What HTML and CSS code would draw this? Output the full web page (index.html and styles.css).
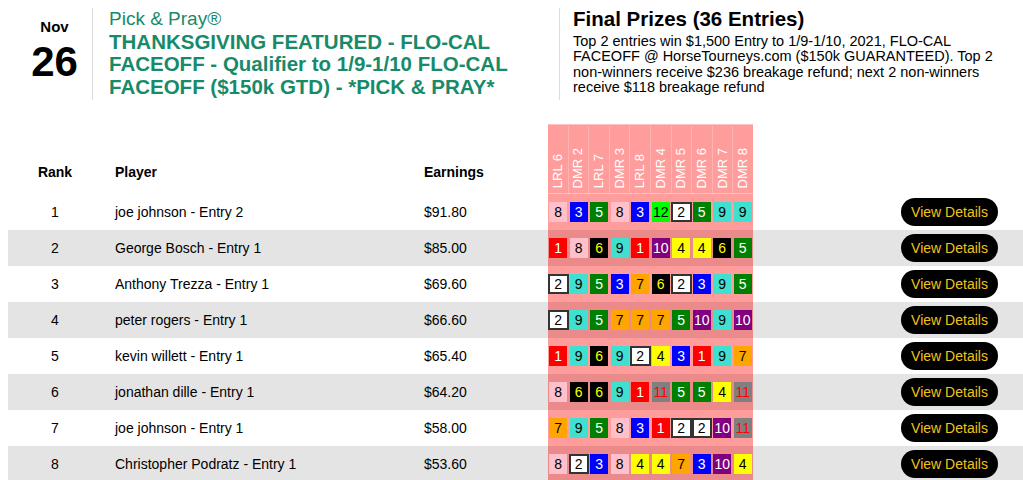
FILE: index.html
```html
<!DOCTYPE html>
<html lang="en">
<head>
<meta charset="utf-8">
<title>Pick &amp; Pray Leaderboard</title>
<link rel="stylesheet" href="styles.css">
</head>
<body>
<div class="top">
  <div class="date">
    <div class="mon">Nov</div>
    <div class="day">26</div>
  </div>
  <div class="title">
    <div class="brand">Pick &amp; Pray®</div>
    <div class="name">THANKSGIVING FEATURED - FLO-CAL FACEOFF - Qualifier to 1/9-1/10 FLO-CAL FACEOFF ($150k GTD) - *PICK &amp; PRAY*</div>
  </div>
  <div class="prizes">
    <div class="prize-head">Final Prizes (36 Entries)</div>
    <div class="prize-text">Top 2 entries win $1,500 Entry to 1/9-1/10, 2021, FLO-CAL FACEOFF @ HorseTourneys.com ($150k GUARANTEED). Top 2 non-winners receive $236 breakage refund; next 2 non-winners receive $118 breakage refund</div>
  </div>
</div>

<table class="board">
  <thead>
    <tr>
      <th class="c-rank">Rank</th>
      <th class="c-player">Player</th>
      <th class="c-earn">Earnings</th>
      <th class="c-picks">
        <div class="races">
          <span class="race"><span>LRL 6</span></span>
          <span class="race"><span>DMR 2</span></span>
          <span class="race"><span>LRL 7</span></span>
          <span class="race"><span>DMR 3</span></span>
          <span class="race"><span>LRL 8</span></span>
          <span class="race"><span>DMR 4</span></span>
          <span class="race"><span>DMR 5</span></span>
          <span class="race"><span>DMR 6</span></span>
          <span class="race"><span>DMR 7</span></span>
          <span class="race"><span>DMR 8</span></span>
        </div>
      </th>
      <th class="c-act"></th>
    </tr>
  </thead>
  <tbody>
    <tr>
      <td class="c-rank">1</td><td class="c-player">joe johnson - Entry 2</td><td class="c-earn">$91.80</td>
      <td class="c-picks"><div class="picks"><span class="p p8">8</span><span class="p p3">3</span><span class="p p5">5</span><span class="p p8">8</span><span class="p p3">3</span><span class="p p12">12</span><span class="p p2">2</span><span class="p p5">5</span><span class="p p9">9</span><span class="p p9">9</span></div></td>
      <td class="c-act"><a class="btn" href="#">View Details</a></td>
    </tr>
    <tr class="alt">
      <td class="c-rank">2</td><td class="c-player">George Bosch - Entry 1</td><td class="c-earn">$85.00</td>
      <td class="c-picks"><div class="picks"><span class="p p1">1</span><span class="p p8">8</span><span class="p p6">6</span><span class="p p9">9</span><span class="p p1">1</span><span class="p p10">10</span><span class="p p4">4</span><span class="p p4">4</span><span class="p p6">6</span><span class="p p5">5</span></div></td>
      <td class="c-act"><a class="btn" href="#">View Details</a></td>
    </tr>
    <tr>
      <td class="c-rank">3</td><td class="c-player">Anthony Trezza - Entry 1</td><td class="c-earn">$69.60</td>
      <td class="c-picks"><div class="picks"><span class="p p2">2</span><span class="p p9">9</span><span class="p p5">5</span><span class="p p3">3</span><span class="p p7">7</span><span class="p p6">6</span><span class="p p2">2</span><span class="p p3">3</span><span class="p p9">9</span><span class="p p5">5</span></div></td>
      <td class="c-act"><a class="btn" href="#">View Details</a></td>
    </tr>
    <tr class="alt">
      <td class="c-rank">4</td><td class="c-player">peter rogers - Entry 1</td><td class="c-earn">$66.60</td>
      <td class="c-picks"><div class="picks"><span class="p p2">2</span><span class="p p9">9</span><span class="p p5">5</span><span class="p p7">7</span><span class="p p7">7</span><span class="p p7">7</span><span class="p p5">5</span><span class="p p10">10</span><span class="p p9">9</span><span class="p p10">10</span></div></td>
      <td class="c-act"><a class="btn" href="#">View Details</a></td>
    </tr>
    <tr>
      <td class="c-rank">5</td><td class="c-player">kevin willett - Entry 1</td><td class="c-earn">$65.40</td>
      <td class="c-picks"><div class="picks"><span class="p p1">1</span><span class="p p9">9</span><span class="p p6">6</span><span class="p p9">9</span><span class="p p2">2</span><span class="p p4">4</span><span class="p p3">3</span><span class="p p1">1</span><span class="p p9">9</span><span class="p p7">7</span></div></td>
      <td class="c-act"><a class="btn" href="#">View Details</a></td>
    </tr>
    <tr class="alt">
      <td class="c-rank">6</td><td class="c-player">jonathan dille - Entry 1</td><td class="c-earn">$64.20</td>
      <td class="c-picks"><div class="picks"><span class="p p8">8</span><span class="p p6">6</span><span class="p p6">6</span><span class="p p9">9</span><span class="p p1">1</span><span class="p p11">11</span><span class="p p5">5</span><span class="p p5">5</span><span class="p p4">4</span><span class="p p11">11</span></div></td>
      <td class="c-act"><a class="btn" href="#">View Details</a></td>
    </tr>
    <tr>
      <td class="c-rank">7</td><td class="c-player">joe johnson - Entry 1</td><td class="c-earn">$58.00</td>
      <td class="c-picks"><div class="picks"><span class="p p7">7</span><span class="p p9">9</span><span class="p p5">5</span><span class="p p8">8</span><span class="p p3">3</span><span class="p p1">1</span><span class="p p2">2</span><span class="p p2">2</span><span class="p p10">10</span><span class="p p11">11</span></div></td>
      <td class="c-act"><a class="btn" href="#">View Details</a></td>
    </tr>
    <tr class="alt">
      <td class="c-rank">8</td><td class="c-player">Christopher Podratz - Entry 1</td><td class="c-earn">$53.60</td>
      <td class="c-picks"><div class="picks"><span class="p p8">8</span><span class="p p2">2</span><span class="p p3">3</span><span class="p p8">8</span><span class="p p4">4</span><span class="p p4">4</span><span class="p p7">7</span><span class="p p3">3</span><span class="p p10">10</span><span class="p p4">4</span></div></td>
      <td class="c-act"><a class="btn" href="#">View Details</a></td>
    </tr>
  </tbody>
</table>
</body>
</html>
```

FILE: styles.css
```css
html, body {
  margin: 0;
  padding: 0;
  background: #fff;
}
body {
  font-family: "Liberation Sans", Arial, Helvetica, sans-serif;
  color: #000;
  font-size: 14px;
  overflow: hidden;
}

/* ---------- top header ---------- */
.top {
  display: flex;
  padding: 8px 0 0 8px;
  height: 92px;
}
.date {
  width: 85px;
  border-right: 1px solid #ddd;
  text-align: center;
  padding: 10px 0 0 9px;
  box-sizing: border-box;
}
.mon {
  font-weight: bold;
  font-size: 15px;
  line-height: 18px;
}
.day {
  font-weight: bold;
  font-size: 42px;
  line-height: 40px;
  margin-top: 6px;
}
.title {
  width: 466px;
  box-sizing: border-box;
  padding: 0 16px 0 16px;
  color: #178a6a;
  font-size: 19px;
  line-height: 22.5px;
}
.brand {
  font-weight: normal;
}
.name {
  font-weight: bold;
  font-size: 20.5px;
}
.prizes {
  border-left: 1px solid #ddd;
  padding-left: 13px;
  width: 437px;
}
.prize-head {
  font-weight: bold;
  font-size: 20.5px;
  line-height: 22px;
}
.prize-text {
  margin-top: 4px;
  font-size: 14.5px;
  line-height: 15.4px;
}

/* ---------- table ---------- */
.board {
  margin: 24px 0 0 8px;
  width: 1015px;
  border-collapse: collapse;
  table-layout: fixed;
}
.board th {
  height: 55px;
  padding: 0 0 14px;
  vertical-align: bottom;
  font-weight: bold;
  font-size: 14px;
  text-align: left;
}
.board td {
  height: 36px;
  padding: 0;
  vertical-align: middle;
  font-size: 14px;
}
.board tr.alt td {
  background: #e4e4e4;
}
.c-rank {
  width: 94px;
  text-align: center !important;
}
.c-player {
  width: 310px;
  padding-left: 13px !important;
  box-sizing: border-box;
}
.c-earn {
  width: 136px;
  padding-left: 12px !important;
  box-sizing: border-box;
}
.c-picks {
  width: 205px;
}
.board th.c-picks {
  height: 67px;
  padding: 0;
  background: #ff9c9c;
  border-top: 1px solid #ffc2c2;
  border-bottom: 1px solid #ffc2c2;
}
.board td.c-picks {
  background: #ff9c9c;
}
.board tr.alt td.c-picks {
  background: #ea8a8a;
}
.c-act {
  text-align: right;
  padding-right: 25px !important;
}

/* race headers */
.races {
  display: flex;
  height: 67px;
}
.race {
  flex: 1;
  display: flex;
  align-items: flex-end;
  justify-content: center;
  padding-bottom: 5px;
  border-right: 1px solid #ffb4b4;
  box-sizing: border-box;
}
.race:last-child {
  border-right: none;
}
.race span {
  writing-mode: vertical-rl;
  transform: rotate(180deg);
  color: #fff;
  font-weight: normal;
  font-size: 13px;
  line-height: 14px;
  white-space: nowrap;
}

/* pick boxes */
.picks {
  display: flex;
}
.picks .p {
  flex: 1;
  height: 20px;
  line-height: 20px;
  font-size: 14px;
  text-align: center;
  background-clip: content-box;
  padding: 0 1.25px;
}
.p1 { background-color: #ff0000; color: #fff; }
.p2 { background-color: #fff; color: #000; box-shadow: inset 0 0 0 2px #333; }
.p3 { background-color: #0000ff; color: #fff; }
.p4 { background-color: #ffff00; color: #000; }
.p5 { background-color: #008000; color: #fff; }
.p6 { background-color: #000; color: #ffff00; }
.p7 { background-color: #ffa500; color: #000; }
.p8 { background-color: #ffc0cb; color: #000; }
.p9 { background-color: #40e0d0; color: #000; }
.p10 { background-color: #800080; color: #fff; }
.p11 { background-color: #808080; color: #ff0000; }
.p12 { background-color: #00ff00; color: #000; }

/* button */
.btn {
  display: inline-block;
  width: 97px;
  height: 28px;
  line-height: 28px;
  border-radius: 14px;
  background: #000;
  color: #f2c21c;
  text-align: center;
  text-decoration: none;
  font-size: 14px;
  vertical-align: middle;
}
```
